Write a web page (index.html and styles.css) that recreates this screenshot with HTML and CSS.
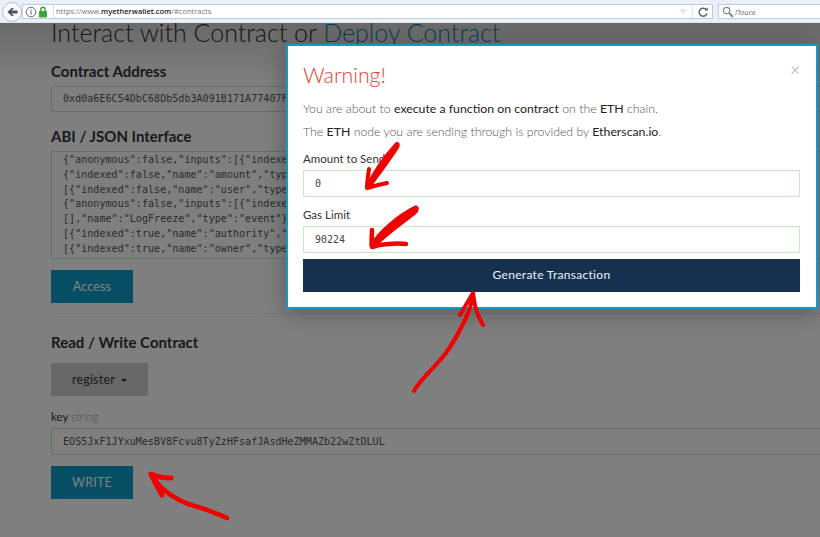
FILE: index.html
```html
<!DOCTYPE html>
<html lang="en">
<head>
<meta charset="utf-8">
<title>MyEtherWallet Contracts</title>
<link rel="stylesheet" href="styles.css">
</head>
<body>
<header class="browser">
  <button class="back" aria-label="Back">
    <svg width="11" height="10" viewBox="0 0 14 12"><path d="M0.5 6 6 .8h2.6L6 4.2h7.5v3.6H6l2.6 3.4H6z" fill="#4d5560"/></svg>
  </button>
  <div class="urlbar">
    <svg class="info" width="12" height="12" viewBox="0 0 12 12"><circle cx="6" cy="6" r="4.8" fill="none" stroke="#6c6c6c"/><path d="M6 5.2v3.4M6 3.2v1.2" stroke="#6c6c6c" stroke-width="1.2"/></svg>
    <svg class="lock" width="10" height="12" viewBox="0 0 10 12"><rect x="1" y="5" width="8" height="6.5" rx="1" fill="#3fa33a"/><path d="M2.8 5V3.4a2.2 2.2 0 0 1 4.4 0V5" fill="none" stroke="#3fa33a" stroke-width="1.4"/></svg>
    <span class="url">https://www.<b>myetherwallet.com</b>/#contracts</span>
    <svg class="drop" width="8" height="6" viewBox="0 0 8 6"><path d="M0 0h8L4 6z" fill="#e4e8ee"/></svg>
    <span class="reload">
      <svg width="12" height="12" viewBox="0 0 12 12"><path d="M9.6 4.2A4 4 0 1 0 10 7.4" fill="none" stroke="#5b6570" stroke-width="1.5"/><path d="M7.4 4.6h3.4V1.2z" fill="#5b6570"/></svg>
    </span>
  </div>
  <div class="search">
    <svg width="12" height="12" viewBox="0 0 12 12"><circle cx="4.6" cy="4.6" r="3.2" fill="none" stroke="#7c8794" stroke-width="1.3"/><path d="M7 7l4 4" stroke="#7c8794" stroke-width="1.8"/></svg>
    <span>Поиск</span>
  </div>
</header>

<main class="page">
  <h1 class="title">Interact with Contract or <a>Deploy Contract</a></h1>
  <h2 class="label first">Contract Address</h2>
  <div class="field">0xd0a6E6C54DbC68Db5db3A091B171A77407Ff7ccf</div>
  <h2 class="label abi">ABI / JSON Interface</h2>
  <div class="field area">
    <div>{"anonymous":false,"inputs":[{"indexed":true,"name":"from","type":"address"}</div>
    <div>{"indexed":false,"name":"amount","type":"uint256"}],"name":"Transfer","type"</div>
    <div>[{"indexed":false,"name":"user","type":"address"}],"name":"LogRegister","type"</div>
    <div>{"anonymous":false,"inputs":[{"indexed":false,"name":"castAt","type":"uint"}</div>
    <div>[],"name":"LogFreeze","type":"event"},{"anonymous":false,"inputs":[{"indexed"</div>
    <div>[{"indexed":true,"name":"authority","type":"address"}],"name":"LogSetAuth"</div>
    <div>[{"indexed":true,"name":"owner","type":"address"}],"name":"LogSetOwner"</div>
  </div>
  <button class="btn access">Access</button>
  <hr class="rule">
  <h2 class="label rw">Read / Write Contract</h2>
  <button class="select">register <i class="caret"></i></button>
  <p class="key">key <span>string</span></p>
  <div class="field keyval">EOS5JxF1JYxuMesBV8Fcvu8TyZzHFsafJAsdHeZMMAZb22wZtDLUL</div>
  <button class="btn write">WRITE</button>

  <div class="backdrop"></div>

  <section class="modal">
    <span class="close">×</span>
    <h3 class="warn">Warning!</h3>
    <p class="msg">You are about to <b>execute a function on contract</b> on the <b>ETH</b> chain.</p>
    <p class="msg">The <b>ETH</b> node you are sending through is provided by <b>Etherscan.io</b>.</p>
    <label class="mlabel amount">Amount to Send</label>
    <div class="minput">0</div>
    <label class="mlabel gas">Gas Limit</label>
    <div class="minput">90224</div>
    <button class="generate">Generate Transaction</button>
  </section>
</main>

<svg class="ink" width="820" height="537" viewBox="0 0 820 537" fill="none" stroke="#f00000" stroke-linecap="round" stroke-linejoin="round">
  <path d="M396 143C399 142 400 145 398 148C391 159 379 175 369 189L366 187C373 172 384 156 396 143Z" fill="#f00000" stroke-width="1.5"/>
  <path d="M369 169C368 176 367 182 367 188C374 186 381 184 387 183" stroke-width="4"/>
  <path d="M416 207C419 206 419 211 415 214C405 222 385 236 374 248L370 245C378 233 395 216 416 206Z" fill="#f00000" stroke-width="1.5"/>
  <path d="M372 230C372 236 371 241 372 247C381 244 396 243 406 244" stroke-width="4.5"/>
  <path d="M414 391C420 380 430 372 440 360C450 350 458 334 465 320C469 312 472 304 473 293" stroke-width="4"/>
  <path d="M460 315C464 308 469 300 473 293C474 303 476 314 483 325" stroke-width="4"/>
  <path d="M227 518C218 514 208 510 198 507C186 504 172 497 163 489C158 485 154 479 151 474" stroke-width="4.5"/>
  <path d="M162 495C158 488 154 481 151 474C157 477 165 478 171 478" stroke-width="5"/>
</svg>
</body>
</html>
```

FILE: styles.css
```css
* { box-sizing: border-box; }
html, body { margin: 0; height: 537px; overflow: hidden; background: #fff; }
body { position: relative; font-family: Lato, "Open Sans", sans-serif; }

.browser {
  height: 23px;
  display: flex;
  align-items: center;
  gap: 4px;
  padding: 3px 0 2px 12px;
  background: #e9f0f9;
  border-bottom: 1px solid #dfe6ef;
}
.back {
  width: 20px; height: 20px; padding: 0;
  margin-left: -10px;
  border: 1px solid #b3c0d0; border-radius: 50%;
  background: #f6f8fb;
  display: flex; align-items: center; justify-content: center;
  flex: none;
  position: relative; z-index: 1;
}
.urlbar {
  margin-left: -4px;
  width: 691px; height: 15px;
  display: flex; align-items: center;
  background: #fff;
  border: 1px solid #c2ccd8;
  padding-left: 2px;
  flex: none;
}
.info { flex: none; }
.lock { flex: none; margin-left: 1px; margin-right: 5px; }
.url {
  border-left: 1px solid #d9dde3;
  padding-left: 2px;
  font: 7.5px/13px "Open Sans", sans-serif;
  color: #777;
  flex: 1;
  white-space: nowrap;
}
.url b { font-weight: 600; color: #222; }
.drop { flex: none; margin-right: 5px; }
.reload {
  width: 20px; height: 13px;
  border-left: 1px solid #dfe3e8;
  display: flex; align-items: center; justify-content: center;
  flex: none;
}
.search {
  margin-left: 1px;
  flex: 1; height: 15px;
  background: #fff;
  border: 1px solid #c2ccd8; border-right: 0;
  display: flex; align-items: center; gap: 1px;
  padding-left: 3px;
  font: italic 7.5px "Open Sans", sans-serif;
  color: #6b6b6b;
}

.page {
  position: relative;
  height: 514px;
  overflow: hidden;
  padding: 0 0 0 51px;
  background: #fff;
  color: #333;
}
.title {
  margin: -7px 0 0;
  font-size: 25px; line-height: 32px; font-weight: 300;
  white-space: nowrap;
  color: #333;
}
.title a { color: #0e97c0; }
.label {
  margin: 0;
  font-size: 15px; line-height: 18px; font-weight: 700;
  color: #333;
}
.first { margin-top: 14px; }
.abi { margin-top: 15px; }
.field {
  margin-top: 6px;
  width: 900px; height: 26px;
  border: 1px solid #c0e8c0;
  padding: 0 11px;
  font: 10px/24px "DejaVu Sans Mono", monospace;
  letter-spacing: .05px;
  color: #555;
  white-space: nowrap;
  overflow: hidden;
}
.area {
  height: 108px;
  line-height: 14.8px;
  padding-top: 1px;
  margin-top: 6px;
}
.btn {
  display: block;
  width: 82px; height: 33px;
  background: #0d9dc9;
  border: 0;
  color: #fff;
  font: 12.5px Lato, sans-serif;
  padding: 0;
}
.access { margin-top: 11px; letter-spacing: .15px; }
.rule { margin: 10px 0 0; width: 900px; border: 0; border-top: 1px solid #eee; }
.rw { margin-top: 19px; }
.select {
  display: block;
  margin-top: 12px;
  width: 97px; height: 33px;
  background: #d0d0d0;
  border: 0; padding: 0;
  color: #333;
  font: 12.5px Lato, sans-serif;
  letter-spacing: .2px;
}
.caret {
  display: inline-block;
  margin-left: 3px;
  vertical-align: 2px;
  border: 3px solid transparent;
  border-top-color: #333;
  border-bottom: 0;
}
.key {
  margin: 13px 0 0;
  font-size: 11.5px; line-height: 16px;
  color: #333;
}
.key span { color: #999; font-weight: 300; }
.keyval { margin-top: 3px; height: 27px; line-height: 25px; }
.write { margin-top: 11px; letter-spacing: .25px; }

.backdrop {
  position: absolute; inset: 0;
  background: linear-gradient(#00000096, #00000080 60px);
}

.modal {
  position: absolute;
  left: 286px; top: 21px;
  width: 532px; height: 265px;
  background: #fff;
  border: 2px solid #0e9bc8;
  box-shadow: 0 3px 24px rgba(0, 0, 0, .3);
  padding: 17px 16px 0 15px;
}
.close {
  position: absolute;
  right: 16px; top: 13px;
  font-size: 17px; line-height: 22px;
  color: #c4c4c4;
}
.warn {
  margin: 0 0 12px;
  font-size: 21.3px; line-height: 25px; font-weight: 300;
  color: #e23f33;
}
.msg {
  margin: 0 0 5px;
  font-size: 12.3px; line-height: 18px; font-weight: 300;
  color: #555;
  white-space: nowrap;
}
.msg b { font-weight: 400; color: #222; }
.mlabel {
  display: block;
  font-size: 11.5px; line-height: 15px;
  color: #333;
}
.amount { margin-top: 10px; }
.gas { margin-top: 10px; }
.minput {
  margin-top: 4px;
  height: 27px;
  border: 1px solid #c8ecc8;
  padding: 0 11px;
  font: 10px/26px "DejaVu Sans Mono", monospace;
  color: #444;
}
.generate {
  display: block;
  width: 100%; height: 33px;
  margin-top: 6px;
  padding: 0 0 2px;
  border: 0;
  background: #163150;
  color: #eef1f4;
  font: 12px Lato, sans-serif;
  letter-spacing: .3px;
}

.ink { position: absolute; left: 0; top: 0; pointer-events: none; }
```
